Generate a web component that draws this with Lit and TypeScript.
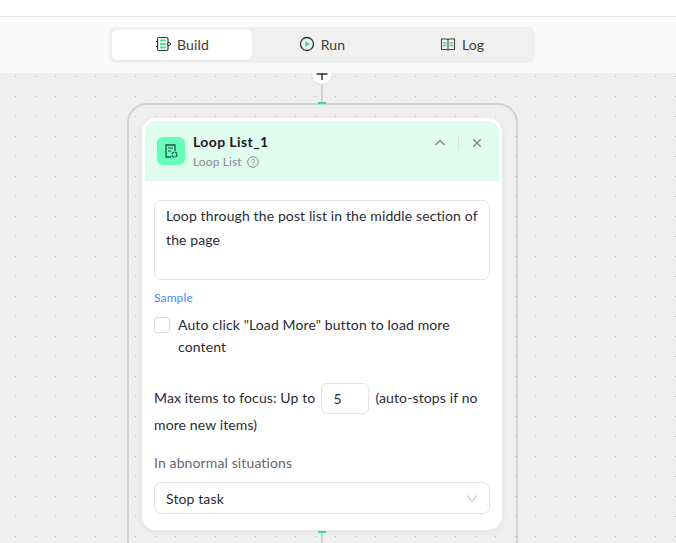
import { LitElement, html, css } from "lit";
import { customElement } from "lit/decorators.js";

@customElement("app-root")
export class AppRoot extends LitElement {
  static styles = css`
    :host {
      display: flex;
      flex-direction: column;
      width: 676px;
      height: 543px;
      overflow: hidden;
      font-family: "Lato", "Liberation Sans", sans-serif;
      font-size: 14px;
      letter-spacing: 0.12px;
      color: #2b2b33;
    }
    .topbar {
      height: 17px;
      flex: none;
      box-sizing: border-box;
      background: #fff;
      border-bottom: 1px solid #e6e6e6;
    }
    .toolbar {
      position: relative;
      z-index: 2;
      height: 56px;
      flex: none;
      background: #fafafa;
      padding: 10px 0 0 109px;
      box-sizing: border-box;
    }
    .tabs {
      display: flex;
      width: 426px;
      height: 36px;
      box-sizing: border-box;
      padding: 3px;
      background: #f0f0f0;
      border-radius: 6px;
    }
    .tab {
      flex: 1;
      display: flex;
      align-items: center;
      justify-content: center;
      gap: 6px;
      padding-bottom: 2px;
      box-sizing: border-box;
      color: #3d3d3d;
      border-radius: 5px;
    }
    .tab.active {
      background: #fff;
      box-shadow: 0 1px 2px rgba(0, 0, 0, 0.05);
    }
    .canvas {
      position: relative;
      flex: 1;
      background-color: #efefef;
      background-image: radial-gradient(circle at 0.5px 0.5px, #b8b8b8 0.5px, transparent 0.7px);
      background-size: 20px 20px;
      background-position: 15px 3px;
    }
    .plus {
      position: absolute;
      left: 311px;
      top: -10px;
      z-index: 1;
      width: 22px;
      height: 22px;
      box-sizing: border-box;
      border: 1px solid #dcdcdc;
      border-radius: 50%;
      background: #fff;
    }
    .wire {
      position: absolute;
      left: 321px;
      width: 2px;
      background: #ced2da;
    }
    .wire.top {
      top: 12px;
      height: 18px;
    }
    .wire.bottom {
      top: 459px;
      height: 20px;
    }
    .port {
      position: absolute;
      left: 318px;
      width: 8px;
      height: 2px;
      background: #3ddc8b;
      z-index: 1;
    }
    .frame {
      position: absolute;
      left: 127px;
      top: 30px;
      width: 391px;
      height: 520px;
      box-sizing: border-box;
      border: 2px solid #ced2da;
      border-radius: 20px;
    }
    .card {
      position: absolute;
      left: 142px;
      top: 45px;
      width: 360px;
      height: 412px;
      box-sizing: border-box;
      padding: 3px;
      background: #fff;
      border-radius: 14px;
      box-shadow: 0 2px 8px rgba(0, 0, 0, 0.06);
      z-index: 1;
    }
    .head {
      display: flex;
      align-items: flex-start;
      height: 60px;
      box-sizing: border-box;
      padding: 12px 16px 0 12px;
      background: #e0fdf0;
      border-radius: 11px 11px 0 0;
    }
    .node-icon {
      display: flex;
      align-items: center;
      justify-content: center;
      width: 28px;
      height: 28px;
      margin-top: 4px;
      background: #66fcb9;
      border-radius: 6px;
      flex: none;
    }
    .titles {
      margin-left: 8px;
      flex: 1;
    }
    .title {
      font-size: 14px;
      font-weight: 700;
      letter-spacing: 0.4px;
      line-height: 18px;
      color: #1b1b22;
    }
    .sub {
      display: flex;
      align-items: center;
      gap: 5px;
      margin-top: 3px;
      font-size: 12px;
      line-height: 16px;
      color: #8a8a94;
    }
    .actions {
      display: flex;
      align-items: center;
      padding-top: 3px;
      color: #7b8a84;
    }
    .divider {
      width: 1px;
      height: 14px;
      margin: 0 12px;
      background: #d5e6dd;
    }
    .body {
      padding: 19px 9px 0;
    }
    .area {
      height: 80px;
      box-sizing: border-box;
      padding: 3px 11px;
      border: 1px solid #e2e2e2;
      border-radius: 7px;
      line-height: 24px;
    }
    .sample {
      margin-top: 11px;
      font-size: 12px;
      line-height: 14px;
      color: #3f8cff;
    }
    .check {
      display: flex;
      gap: 8px;
      margin-top: 9px;
      line-height: 22px;
    }
    .box {
      flex: none;
      width: 16px;
      height: 16px;
      margin-top: 3px;
      box-sizing: border-box;
      border: 1px solid #dcdcdc;
      border-radius: 3px;
    }
    .limit {
      margin-top: 26px;
      line-height: 27px;
    }
    .num {
      display: inline-block;
      width: 48px;
      height: 31px;
      margin: -6px 6px -4px;
      box-sizing: border-box;
      padding-left: 11px;
      border: 1px solid #e2e2e2;
      border-radius: 6px;
      line-height: 29px;
      vertical-align: middle;
    }
    .label {
      margin-top: 16px;
      line-height: 18px;
      color: #666670;
    }
    .select {
      display: flex;
      align-items: center;
      justify-content: space-between;
      height: 32px;
      margin-top: 10px;
      box-sizing: border-box;
      padding: 0 11px;
      border: 1px solid #e2e2e2;
      border-radius: 7px;
    }
  `;

  render() {
    return html`
      <div class="topbar"></div>
      <div class="toolbar">
        <div class="tabs">
          <div class="tab active">
            <svg width="16" height="16" viewBox="0 0 16 16" fill="none">
              <rect x="2.5" y="1.5" width="10.5" height="13" rx="1.5" stroke="#333" stroke-width="1.2" />
              <path d="M5 4.5h6M5 8h6M5 11.5h6" stroke="#4be39a" stroke-width="2" />
              <path d="M1 5.5h2M1 10.5h2" stroke="#333" stroke-width="1.2" />
              <circle cx="14" cy="8" r="1.5" fill="#fff" stroke="#333" />
            </svg>
            Build
          </div>
          <div class="tab">
            <svg width="16" height="16" viewBox="0 0 16 16" fill="none">
              <circle cx="8" cy="8" r="6.5" stroke="#333" stroke-width="1.3" />
              <path d="M6.3 5.2v5.6L11 8z" fill="#3ddc8b" />
            </svg>
            Run
          </div>
          <div class="tab">
            <svg width="16" height="16" viewBox="0 0 16 16" fill="none">
              <path d="M1.5 3h5.5l1 .8L9 3h5.5v10.5H9l-1 .7-1-.7H1.5z" stroke="#444" stroke-width="1.1" />
              <path d="M8 3.8v10.4" stroke="#444" />
              <path d="M3 7h3.5M9.5 7H13M3 9.5h3.5M9.5 9.5H13" stroke="#3ddc8b" stroke-width="1.4" />
            </svg>
            Log
          </div>
        </div>
      </div>
      <div class="canvas">
        <div class="plus">
          <svg width="20" height="20" viewBox="0 0 20 20" fill="none">
            <path d="M10 4v12M4.5 10h11" stroke="#333" stroke-width="1.5" />
          </svg>
        </div>
        <div class="wire top"></div>
        <div class="port" style="top:29px"></div>
        <div class="frame"></div>
        <div class="card">
          <div class="head">
            <div class="node-icon">
              <svg width="16" height="16" viewBox="0 0 16 16" fill="none">
                <path d="M8 14H3V2h9v6" stroke="#24544a" stroke-width="1.3" />
                <path d="M5 5h5M5 8h3" stroke="#24544a" stroke-width="1.2" />
                <circle cx="11.5" cy="11.5" r="2.5" stroke="#24544a" stroke-width="1.3" stroke-dasharray="3 1" />
              </svg>
            </div>
            <div class="titles">
              <div class="title">Loop List_1</div>
              <div class="sub">
                Loop List
                <svg width="12" height="12" viewBox="0 0 12 12" fill="none">
                  <circle cx="6" cy="6" r="5.3" stroke="#8a8a94" />
                  <path d="M4.5 4.7c0-2 3-2 3 0 0 1.2-1.5 1.1-1.5 2.4" stroke="#8a8a94" />
                  <circle cx="6" cy="8.9" r=".6" fill="#8a8a94" />
                </svg>
              </div>
            </div>
            <div class="actions">
              <svg width="12" height="12" viewBox="0 0 12 12" fill="none">
                <path d="M1.5 8L6 3.5 10.5 8" stroke="currentColor" stroke-width="1.4" />
              </svg>
              <div class="divider"></div>
              <svg width="12" height="12" viewBox="0 0 12 12" fill="none">
                <path d="M2.2 2.2l7.6 7.6M9.8 2.2l-7.6 7.6" stroke="currentColor" stroke-width="1.4" />
              </svg>
            </div>
          </div>
          <div class="body">
            <div class="area">Loop through the post list in the middle section of the page</div>
            <div class="sample">Sample</div>
            <div class="check">
              <div class="box"></div>
              <div>Auto click "Load More" button to load more content</div>
            </div>
            <div class="limit">
              Max items to focus: Up to<span class="num">5</span>(auto-stops if no more new items)
            </div>
            <div class="label">In abnormal situations</div>
            <div class="select">
              Stop task
              <svg width="12" height="12" viewBox="0 0 12 12" fill="none">
                <path d="M1 3.5l5 6 5-6" stroke="#c4c4c4" stroke-width="1.1" />
              </svg>
            </div>
          </div>
        </div>
        <div class="port" style="top:458px"></div>
        <div class="wire bottom"></div>
      </div>
    `;
  }
}
